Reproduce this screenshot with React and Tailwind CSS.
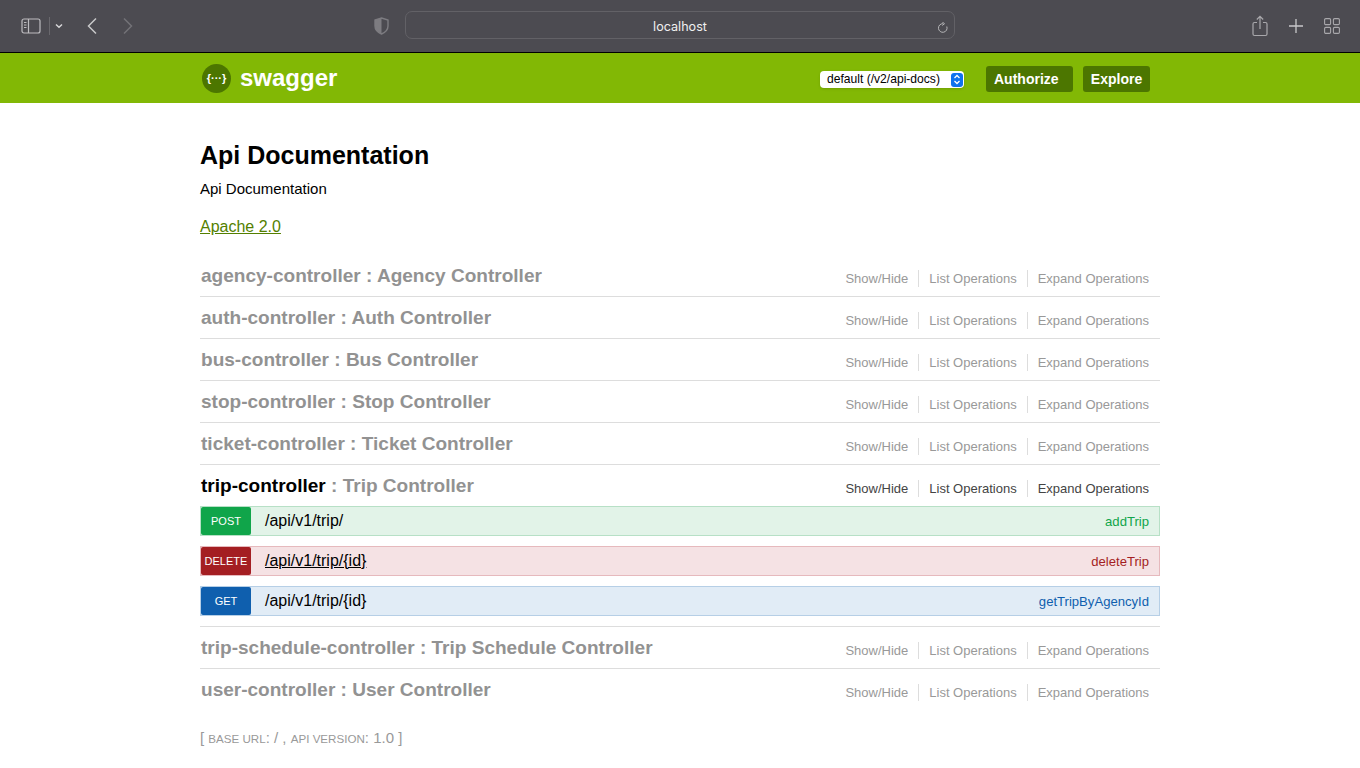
import React from 'react';

const controllers = [
  { name: 'agency-controller', desc: 'Agency Controller' },
  { name: 'auth-controller', desc: 'Auth Controller' },
  { name: 'bus-controller', desc: 'Bus Controller' },
  { name: 'stop-controller', desc: 'Stop Controller' },
  { name: 'ticket-controller', desc: 'Ticket Controller' },
];

const operations = [
  {
    method: 'POST',
    path: '/api/v1/trip/',
    nick: 'addTrip',
    row: 'bg-[#e2f3e8] border-[#b7e0c6]',
    badge: 'bg-[#10a54a]',
    nickColor: 'text-[#10a54a]',
  },
  {
    method: 'DELETE',
    path: '/api/v1/trip/{id}',
    nick: 'deleteTrip',
    row: 'bg-[#f5e2e4] border-[#e6b9bd]',
    badge: 'bg-[#a41e22]',
    nickColor: 'text-[#a41e22]',
    underline: true,
  },
  {
    method: 'GET',
    path: '/api/v1/trip/{id}',
    nick: 'getTripByAgencyId',
    row: 'bg-[#e1ecf6] border-[#b6cfe6]',
    badge: 'bg-[#0f5fae]',
    nickColor: 'text-[#0f5fae]',
  },
];

const ControllerRow = ({ name, desc, active, plain }) => (
  <div className={`flex items-start justify-between ${active ? 'h-[41px]' : 'h-[42px]'} ${plain ? '' : 'border-b border-[#dddddd]'}`}>
    <h2 className="text-[19.040px] leading-[22px] font-bold text-[#929292] pt-[10px] pl-px">
      <span className={active ? 'text-black' : 'text-[#929292]'}>{name}</span> : {desc}
    </h2>
    <div className={`flex items-center text-[13px] leading-[17px] mt-[15px] pr-[11px] ${active ? 'text-[#444444]' : 'text-[#999999]'}`}>
      <span className="pr-[10px] border-r border-[#dddddd]">Show/Hide</span>
      <span className="px-[10px] border-r border-[#dddddd]">List Operations</span>
      <span className="pl-[10px]">Expand Operations</span>
    </div>
  </div>
);

const OperationRow = ({ method, path, nick, row, badge, nickColor, underline }) => (
  <div className={`flex items-center h-[30px] border ${row}`}>
    <span className={`w-[50px] h-[28px] pt-px flex items-center justify-center rounded-[2px] text-white text-[11px] font-medium ${badge}`}>
      {method}
    </span>
    <span className={`ml-[14px] text-[16px] leading-[24px] -mt-px text-black ${underline ? 'underline' : ''}`}>{path}</span>
    <span className={`ml-auto pr-[10px] mt-px text-[13.100px] ${nickColor}`}>{nick}</span>
  </div>
);

const BrowserToolbar = () => (
  <div className="relative h-[53px] bg-[#4c4b51] border-b border-black flex items-center shrink-0">
    <svg width="20" height="16" viewBox="0 0 20 16" fill="none" className="ml-[21px] text-[#bdbcc0]" stroke="currentColor">
      <rect x="1" y="1" width="18" height="14" rx="2" strokeWidth="1.2" />
      <path d="M7.5 1v14" strokeWidth="1.2" />
      <path d="M3 4.5h2.5M3 7h2.5M3 9.5h2.5" strokeWidth="1" />
    </svg>
    <div className="w-px h-[18px] bg-[#69686d] ml-[8px]" />
    <svg width="10" height="8" viewBox="0 0 10 8" fill="none" stroke="#d8d8da" strokeWidth="1.5" className="ml-[4px]">
      <path d="M2 2.5 5 5.2 8 2.5" />
    </svg>
    <svg width="12" height="18" viewBox="0 0 12 18" fill="none" stroke="#c8c8ca" strokeWidth="1.5" className="ml-[22px]">
      <path d="M10 1.5 2.5 9 10 16.5" />
    </svg>
    <svg width="12" height="18" viewBox="0 0 12 18" fill="none" stroke="#737277" strokeWidth="1.5" className="ml-[24px]">
      <path d="M2 1.5 9.5 9 2 16.5" />
    </svg>
    <svg width="15" height="18" viewBox="0 0 15 18" className="ml-[240px]">
      <path d="M7.5 1 14 3v6c0 4-3 6.500-6.500 8C4 15.500 1 13 1 9V3Z" fill="none" stroke="#7d7c81" strokeWidth="1.400" />
      <path d="M7.500 1 1 3v6c0 4 3 6.500 6.500 8Z" fill="#7d7c81" />
    </svg>
    <div className="relative ml-[16px] mb-[2px] pt-[4px] w-[550px] h-[28px] rounded-[7px] border border-[#626166] flex items-center justify-center text-[12.600px] text-[#f0f0f0] font-['Inter',sans-serif]">
      localhost
      <svg width="12" height="12" viewBox="0 0 12 12" fill="none" stroke="#b5b5b7" strokeWidth="1" className="absolute right-[5px] top-[10px]">
        <path d="M9.800 4.500A4.300 4.300 0 1 1 6 1.700" />
        <path d="M5.300 0 7.500 1.700 5.300 3.500" />
      </svg>
    </div>
    <svg width="16" height="22" viewBox="0 0 16 22" fill="none" stroke="#a9a8ac" strokeWidth="1.200" className="ml-[297px]">
      <path d="M5 7.500H2.500a1.500 1.500 0 0 0-1.500 1.500v10a1.500 1.500 0 0 0 1.500 1.500h11a1.500 1.500 0 0 0 1.500-1.500V9a1.500 1.500 0 0 0-1.500-1.500H11" />
      <path d="M8 14V1.500M4.800 4.500 8 1.300l3.200 3.200" />
    </svg>
    <svg width="14" height="14" viewBox="0 0 14 14" fill="none" stroke="#c8c8ca" strokeWidth="1.300" className="ml-[21px]">
      <path d="M7 0v14M0 7h14" />
    </svg>
    <svg width="16" height="16" viewBox="0 0 16 16" fill="none" stroke="#a9a8ac" strokeWidth="1.100" className="ml-[21px]">
      <rect x="0.600" y="0.600" width="6" height="6" rx="1.200" />
      <rect x="9.400" y="0.600" width="6" height="6" rx="1.200" />
      <rect x="0.600" y="9.400" width="6" height="6" rx="1.200" />
      <rect x="9.400" y="9.400" width="6" height="6" rx="1.200" />
    </svg>
  </div>
);

const SwaggerHeader = () => (
  <div className="h-[50px] bg-[#82b805] shrink-0">
    <div className="w-[960px] mx-auto flex items-center h-full">
      <div className="w-[29px] h-[29px] mt-px ml-[2px] rounded-full bg-[#4c7600] flex items-center justify-center text-white text-[11px] font-bold">
        {'{···}'}
      </div>
      <span className="ml-[9px] text-[24px] font-bold text-white">swagger</span>
      <div className="ml-auto flex items-center mt-[2px]">
        <div className="w-[144px] h-[17px] mt-px bg-white rounded-[4px] flex items-center justify-between pl-[7px] pr-[1px] text-[12.100px] text-black shadow-sm">
          default (/v2/api-docs)
          <span className="w-[12px] h-[14px] bg-[#0f72ee] rounded-[3px] flex items-center justify-center">
            <svg width="8" height="11" viewBox="0 0 8 11" fill="none" stroke="white" strokeWidth="1.300">
              <path d="M1.500 4 4 1.500 6.500 4M1.500 7 4 9.500 6.500 7" />
            </svg>
          </span>
        </div>
        <span className="ml-[22px] w-[87px] h-[26px] rounded-[3px] bg-[#4c7600] text-white text-[14px] font-bold flex items-center pl-[8px]">Authorize</span>
        <span className="ml-[10px] mr-[10px] w-[67px] h-[26px] rounded-[3px] bg-[#4c7600] text-white text-[14px] font-bold flex items-center justify-center">Explore</span>
      </div>
    </div>
  </div>
);

export default function App() {
  return (
    <div className="w-[1360px] h-[768px] bg-white flex flex-col overflow-hidden font-['Liberation_Sans',Arial,sans-serif]">
      <BrowserToolbar />
      <SwaggerHeader />
      <div className="w-[960px] mx-auto">
        <h1 className="text-[25px] leading-[30px] font-bold text-black mt-[37px]">Api Documentation</h1>
        <p className="text-[15px] leading-[18px] text-black mt-[10px]">Api Documentation</p>
        <a className="block text-[16px] leading-[18px] text-[#547f00] underline mt-[20px]">Apache 2.0</a>
        <div className="mt-[19px]">
          {controllers.map(c => (
            <ControllerRow key={c.name} {...c} />
          ))}
          <ControllerRow name="trip-controller" desc="Trip Controller" active plain />
          <div className="flex flex-col gap-[10px] border-b border-[#dddddd] pb-[10px]">
            {operations.map(op => (
              <OperationRow key={op.method} {...op} />
            ))}
          </div>
          <ControllerRow name="trip-schedule-controller" desc="Trip Schedule Controller" />
          <ControllerRow name="user-controller" desc="User Controller" plain />
        </div>
        <p className="mt-[17px] text-[15px] leading-[20px] text-[#999999]">
          [ <span className="text-[11.600px]">BASE URL</span>: / , <span className="text-[11.600px]">API VERSION</span>: 1.0 ]
        </p>
      </div>
    </div>
  );
}
